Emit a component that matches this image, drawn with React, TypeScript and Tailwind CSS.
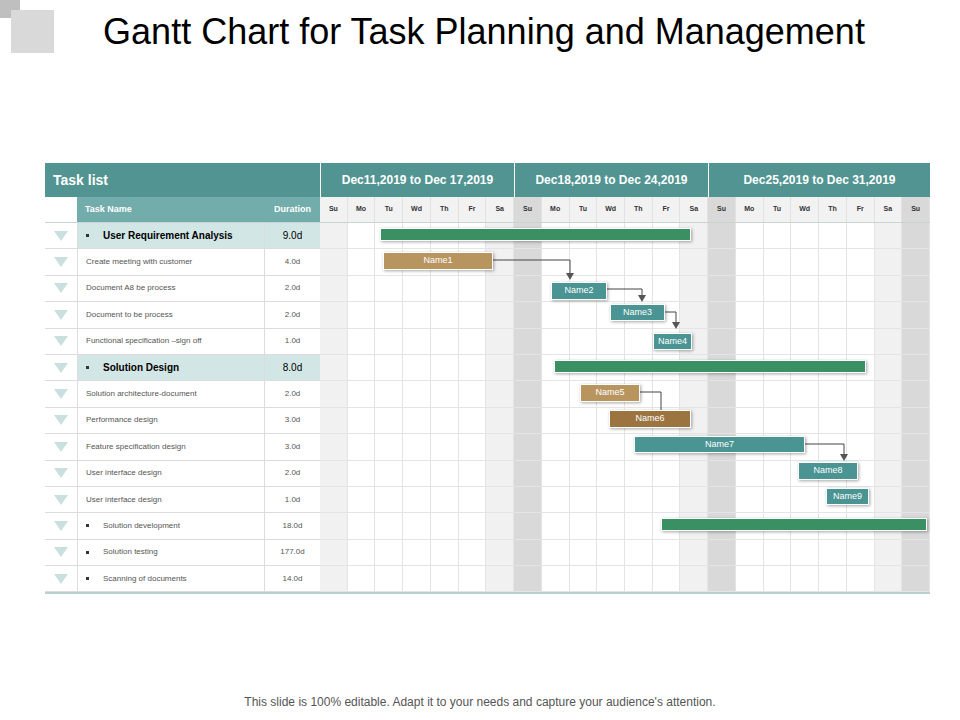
const days = ["Su", "Mo", "Tu", "Wd", "Th", "Fr", "Sa", "Su", "Mo", "Tu", "Wd", "Th", "Fr", "Sa", "Su", "Mo", "Tu", "Wd", "Th", "Fr", "Sa", "Su"]

const tasks = [
  { name: "User Requirement Analysis", dur: "9.0d", kind: "group" },
  { name: "Create meeting with  customer", dur: "4.0d", kind: "task" },
  { name: "Document A8 be process", dur: "2.0d", kind: "task" },
  { name: "Document to be  process", dur: "2.0d", kind: "task" },
  { name: "Functional specification \u2013sign off", dur: "1.0d", kind: "task" },
  { name: "Solution Design", dur: "8.0d", kind: "group" },
  { name: "Solution architecture-document", dur: "2.0d", kind: "task" },
  { name: "Performance  design", dur: "3.0d", kind: "small" },
  { name: "Feature specification design", dur: "3.0d", kind: "task" },
  { name: "User interface design", dur: "2.0d", kind: "task" },
  { name: "User interface design", dur: "1.0d", kind: "task" },
  { name: "Solution development", dur: "18.0d", kind: "bullet" },
  { name: "Solution testing", dur: "177.0d", kind: "bullet" },
  { name: "Scanning of documents", dur: "14.0d", kind: "bullet" },
]

// bars in chart coordinates (origin at first day column, first task row)
const bars = [
  { l: 60, t: 5, w: 311, h: 13, c: "bg-[#3a8f63]", label: "" },
  { l: 63, t: 29, w: 110, h: 18, c: "bg-[#b8945f]", label: "Name1" },
  { l: 231, t: 59, w: 56, h: 18, c: "bg-[#4a9493]", label: "Name2" },
  { l: 290, t: 81, w: 55, h: 17, c: "bg-[#4a9493]", label: "Name3" },
  { l: 333, t: 110, w: 39, h: 17, c: "bg-[#4a9493]", label: "Name4" },
  { l: 234, t: 137, w: 312, h: 13, c: "bg-[#3a8f63]", label: "" },
  { l: 260, t: 161, w: 60, h: 18, c: "bg-[#b8945f]", label: "Name5" },
  { l: 289, t: 187, w: 82, h: 18, c: "bg-[#9b7440]", label: "Name6" },
  { l: 314, t: 213, w: 171, h: 17, c: "bg-[#4a9493]", label: "Name7" },
  { l: 478, t: 239, w: 60, h: 18, c: "bg-[#4a9493]", label: "Name8" },
  { l: 506, t: 265, w: 43, h: 17, c: "bg-[#4a9493]", label: "Name9" },
  { l: 341, t: 295, w: 266, h: 13, c: "bg-[#3a8f63]", label: "" },
]

const links = [
  { x1: 173, y1: 37, x2: 250, y2: 57, arrow: true },
  { x1: 287, y1: 66, x2: 322, y2: 79, arrow: true },
  { x1: 345, y1: 89, x2: 356, y2: 106, arrow: true },
  { x1: 320, y1: 169, x2: 341, y2: 187, arrow: false },
  { x1: 485, y1: 221, x2: 524, y2: 238, arrow: true },
]

function dayBg(i: number) {
  if (i === 7 || i === 14 || i === 21) return "bg-[#d9d9d9]"
  if (i === 0 || i === 6 || i === 13 || i === 20) return "bg-[#f1f1f1]"
  return "bg-white"
}

export default function App() {
  const font = { fontFamily: "Arial, 'Liberation Sans', sans-serif" }
  return (
    <div className="w-[960px] h-[720px] bg-white relative overflow-hidden" style={font}>
      <div className="absolute left-0 top-0 w-[20px] h-[18px] bg-[#bfbfbf]" />
      <div className="absolute left-[11px] top-[10px] w-[43px] h-[43px] bg-[#d9d9d9]" />
      <h1 className="h-[64px] pt-[10px] text-center text-[36px] leading-[44px] text-black pl-[8px]">
        Gantt Chart for Task Planning and Management
      </h1>

      <div className="ml-[45px] mt-[99px] w-[885px]">
        {/* header */}
        <div className="flex h-[34px] bg-[#519491] text-white font-bold">
          <div className="w-[275px] pl-[8px] flex items-center text-[14px]">Task list</div>
          <div className="w-[194px] border-l border-white flex items-center justify-center text-[12px]">Dec11,2019 to Dec 17,2019</div>
          <div className="w-[194px] border-l border-white flex items-center justify-center text-[12px]">Dec18,2019 to Dec 24,2019</div>
          <div className="flex-1 border-l border-white flex items-center justify-center text-[12px]">Dec25,2019 to Dec 31,2019</div>
        </div>
        <div className="flex h-[26px] border-b border-[#c8d3d3]">
          <div className="w-[32px] bg-white" />
          <div className="w-[188px] bg-[#72acab] text-white font-bold text-[9px] flex items-center pl-[8px]">Task Name</div>
          <div className="w-[55px] bg-[#72acab] text-white font-bold text-[9px] flex items-center justify-center">Duration</div>
          <div className="w-[610px] grid grid-cols-[repeat(22,1fr)]">
            {days.map((d, i) => (
              <div
                key={i}
                className={`flex items-center justify-center text-[7px] font-bold text-[#333] border-r border-[#e2e2e2] ${i === 7 || i === 14 || i === 21 ? "bg-[#d9d9d9]" : "bg-[#f2f2f2]"}`}
              >
                {d}
              </div>
            ))}
          </div>
        </div>

        {/* body */}
        <div className="flex border-b-2 border-[#b9cfd0]">
          <div className="w-[275px]">
            {tasks.map((t, i) => (
              <div key={i} className="flex h-[26.4px] border-b border-[#dcdcdc]">
                <div className="w-[32px] flex items-center justify-center">
                  <div className="w-0 h-0 border-l-[7px] border-r-[7px] border-t-[10px] border-l-transparent border-r-transparent border-t-[#c9dfe0]" />
                </div>
                <div
                  className={`w-[188px] flex items-center pl-[8px] border-l border-r border-[#dcdcdc] ${t.kind === "group" ? "bg-[#d3e6e6] text-[10px] font-bold text-black" : "text-[8px] text-[#555]"} ${t.kind === "small" ? "text-[6.5px]" : ""}`}
                >
                  {(t.kind === "group" || t.kind === "bullet") && (
                    <span className="inline-block w-[3px] h-[3px] bg-[#333] mr-[14px]" />
                  )}
                  {t.name}
                </div>
                <div
                  className={`w-[55px] flex items-center justify-center ${t.kind === "group" ? "bg-[#d3e6e6] text-[10px] text-black" : "text-[8px] text-[#555]"}`}
                >
                  {t.dur}
                </div>
              </div>
            ))}
          </div>

          <div className="w-[610px] relative">
            {tasks.map((_, r) => (
              <div key={r} className="grid grid-cols-[repeat(22,1fr)] h-[26.4px]">
                {days.map((_, i) => (
                  <div key={i} className={`${dayBg(i)} border-r border-b border-[#e4e4e4]`} />
                ))}
              </div>
            ))}

            <svg className="absolute left-0 top-0" width="610" height="370">
              {links.map((k, i) => (
                <g key={i}>
                  <polyline
                    points={`${k.x1},${k.y1} ${k.x2},${k.y1} ${k.x2},${k.y2 - (k.arrow ? 6 : 0)}`}
                    fill="none"
                    stroke="#444"
                    strokeWidth="1"
                  />
                  {k.arrow && (
                    <polygon points={`${k.x2 - 4},${k.y2 - 7} ${k.x2 + 4},${k.y2 - 7} ${k.x2},${k.y2}`} fill="#555" />
                  )}
                </g>
              ))}
            </svg>

            {bars.map((b, i) => (
              <div
                key={i}
                className={`absolute ${b.c} border border-white shadow-[1px_1px_3px_rgba(0,0,0,0.35)] flex items-center justify-center text-white text-[9px]`}
                style={{ left: b.l, top: b.t, width: b.w, height: b.h }}
              >
                {b.label}
              </div>
            ))}
          </div>
        </div>
      </div>

      <div className="absolute left-0 right-0 top-[693px] text-center text-[12px] text-[#555]">
        This slide is 100% editable. Adapt it to your needs and capture your audience's attention.
      </div>
    </div>
  )
}
